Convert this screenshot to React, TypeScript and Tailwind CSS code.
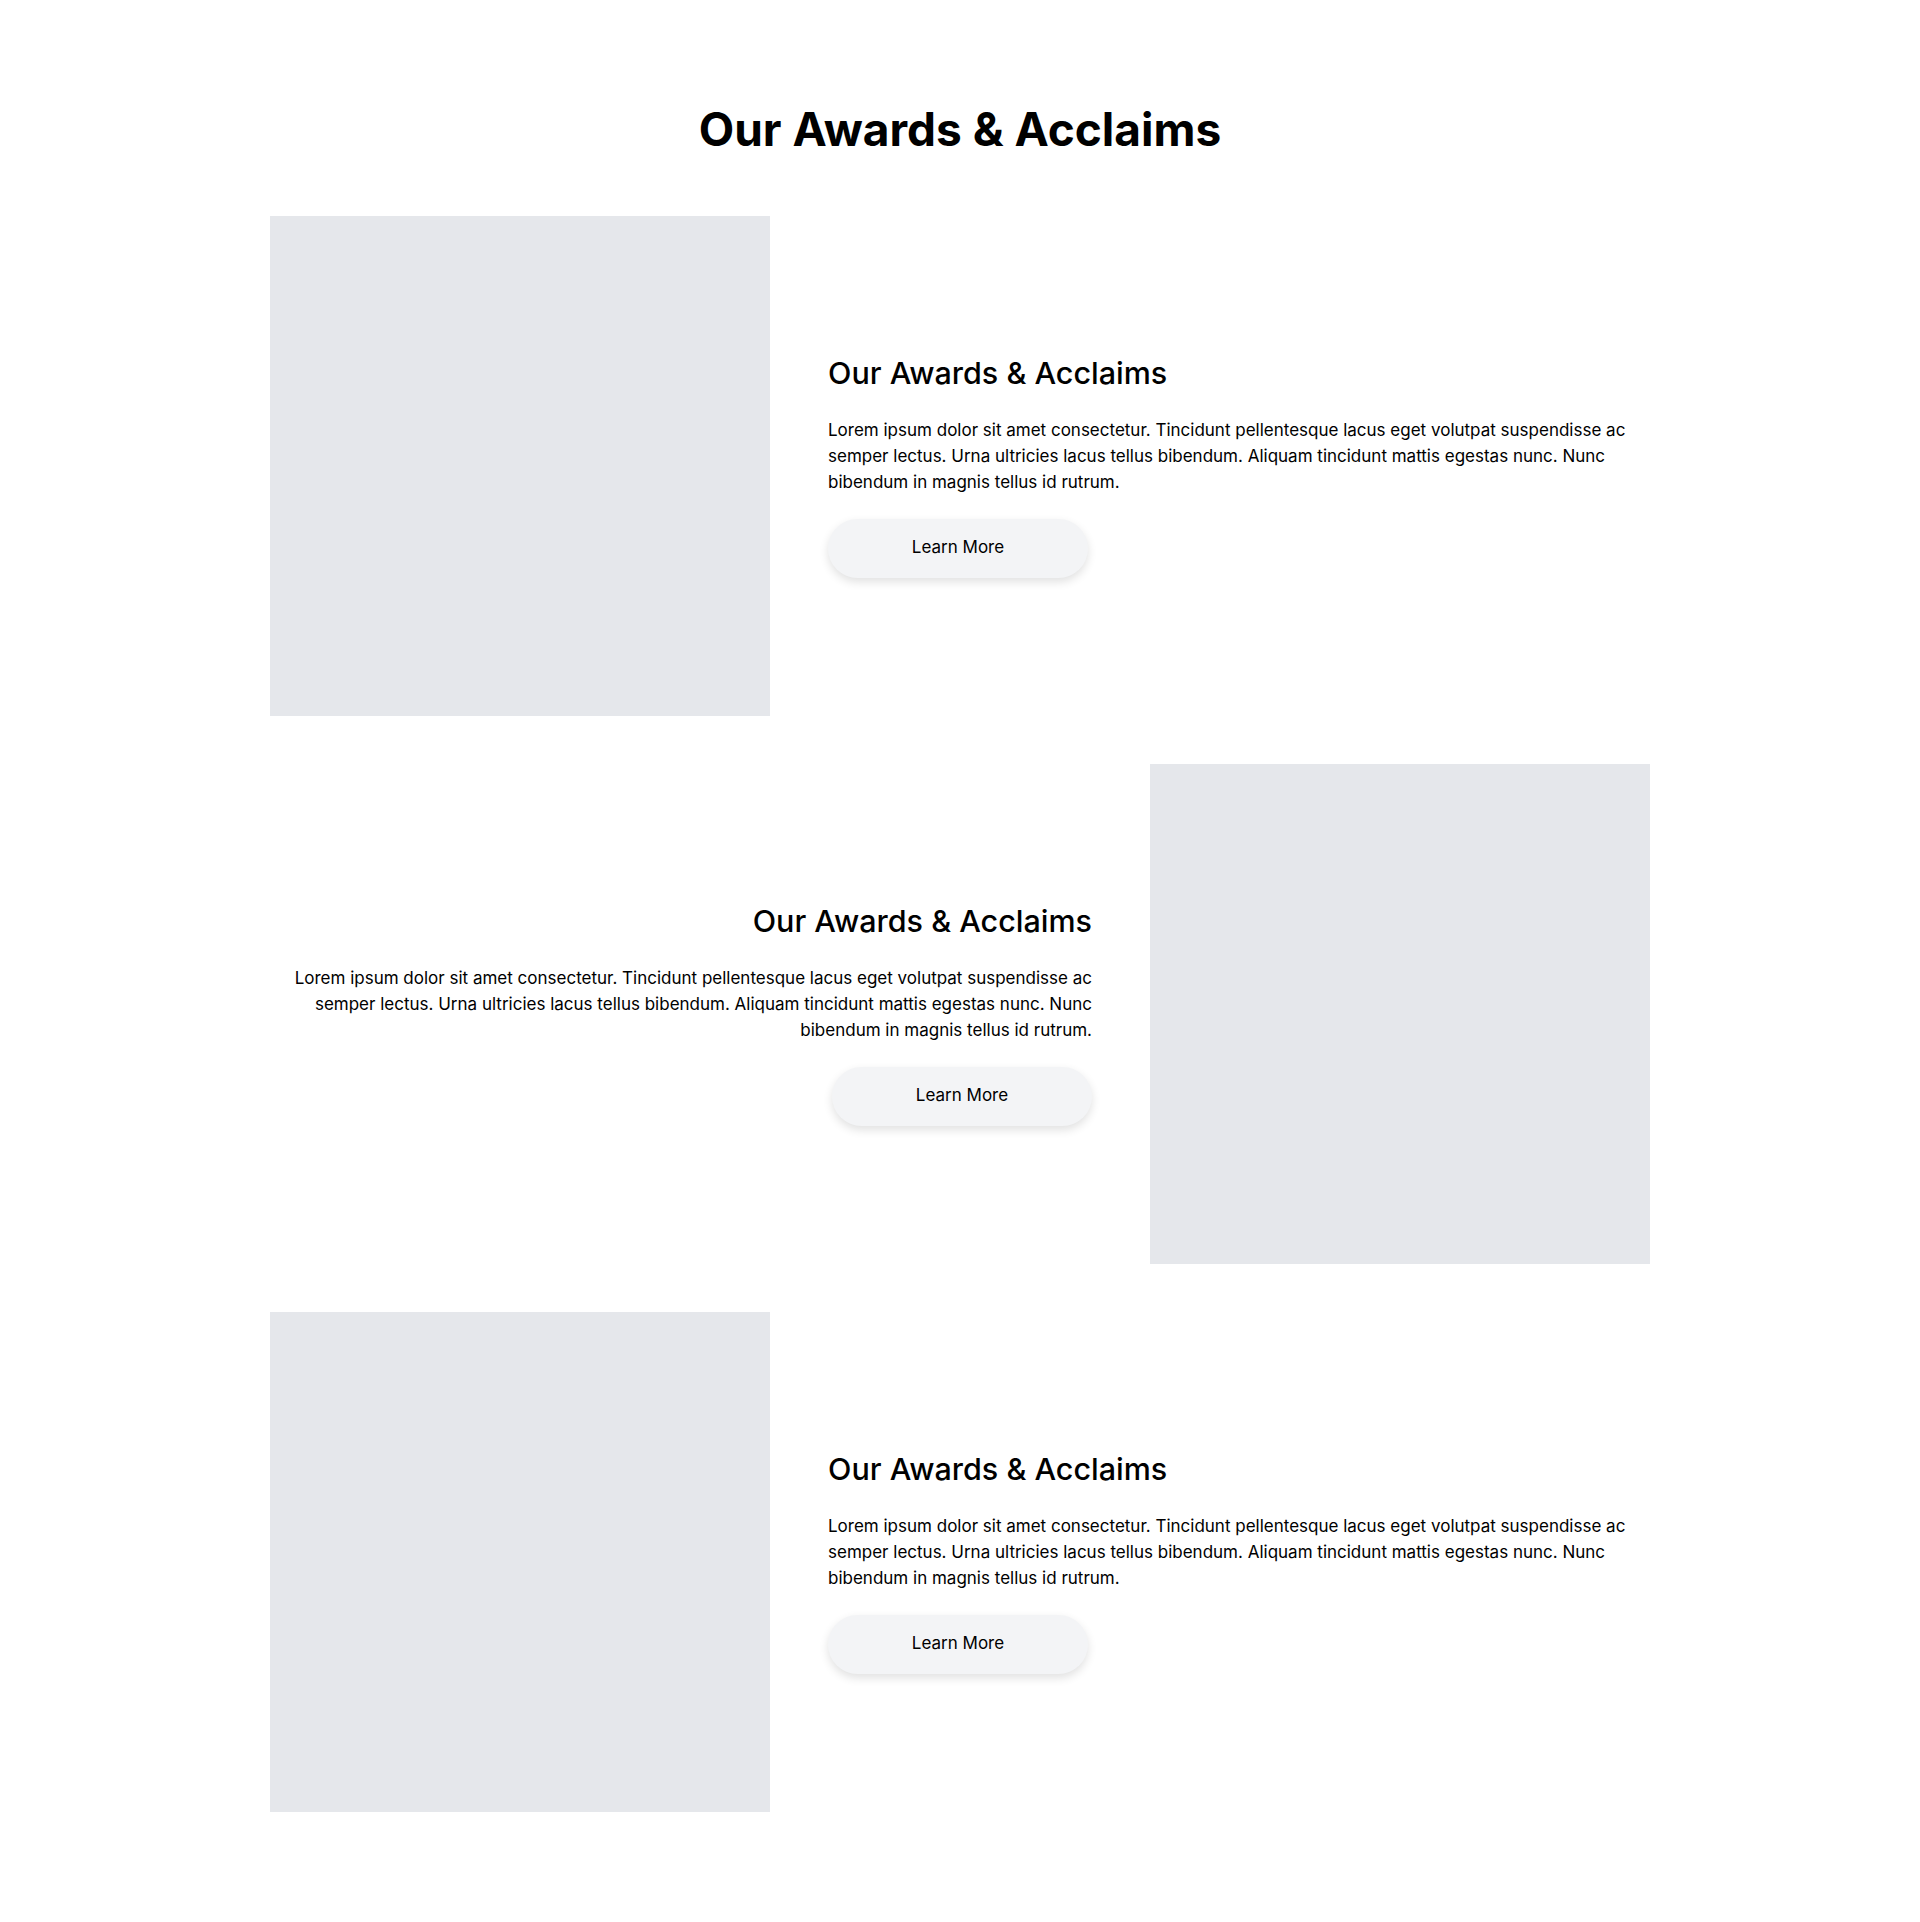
import React from "react";

const body =
  "Lorem ipsum dolor sit amet consectetur. Tincidunt pellentesque lacus eget volutpat suspendisse ac semper lectus. Urna ultricies lacus tellus bibendum. Aliquam tincidunt mattis egestas nunc. Nunc bibendum in magnis tellus id rutrum.";

function Row({ reverse }: { reverse?: boolean }) {
  return (
    <div className={reverse ? "flex flex-row-reverse items-center gap-[58px]" : "flex items-center gap-[58px]"}>
      <div className="w-[500px] h-[500px] shrink-0 bg-[#e5e7eb]" />
      <div className={reverse ? "flex-1 flex flex-col items-end text-right gap-6" : "flex-1 flex flex-col items-start gap-6"}>
        <h2 className="text-[30.5px] leading-[36px] font-medium text-black">Our Awards &amp; Acclaims</h2>
        <p className="text-[17px] leading-[26px] text-black mt-[2px]">{body}</p>
        <button className="w-[260px] h-[59px] rounded-full bg-[#f3f4f6] shadow-[0_4px_10px_rgba(0,0,0,0.12)] text-[17px] font-normal text-black">
          Learn More
        </button>
      </div>
    </div>
  );
}

export default function App() {
  return (
    <div className="min-h-[1922px] bg-white pt-[98px] pb-[110px]" style={{ fontFamily: "Inter, 'Noto Sans', sans-serif" }}>
      <div className="max-w-[1380px] mx-auto">
        <h1 className="text-center text-[46px] leading-[62px] font-bold text-black mb-[56px]">Our Awards &amp; Acclaims</h1>
        <div className="flex flex-col gap-12">
          <Row />
          <Row reverse />
          <Row />
        </div>
      </div>
    </div>
  );
}
